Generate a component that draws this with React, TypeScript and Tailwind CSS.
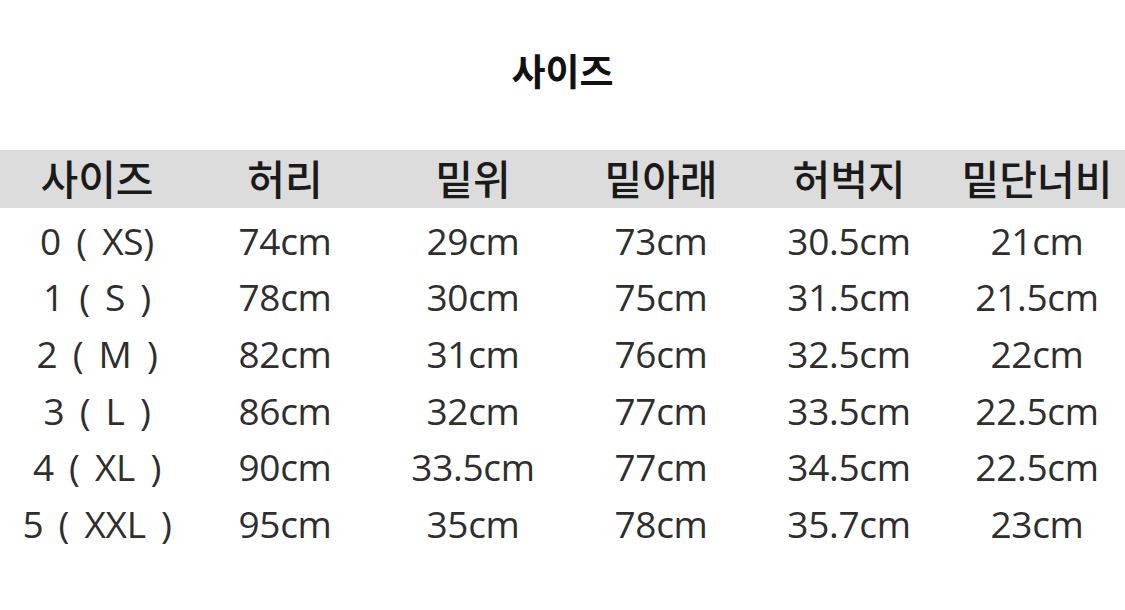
import React from 'react';

const HEADERS = ['사이즈', '허리', '밑위', '밑아래', '허벅지', '밑단너비'];

const ROWS = [
  ['0 ( XS)', '74cm', '29cm', '73cm', '30.5cm', '21cm'],
  ['1 ( S )', '78cm', '30cm', '75cm', '31.5cm', '21.5cm'],
  ['2 ( M )', '82cm', '31cm', '76cm', '32.5cm', '22cm'],
  ['3 ( L )', '86cm', '32cm', '77cm', '33.5cm', '22.5cm'],
  ['4 ( XL )', '90cm', '33.5cm', '77cm', '34.5cm', '22.5cm'],
  ['5 ( XXL )', '95cm', '35cm', '78cm', '35.7cm', '23cm'],
];

const font = { fontFamily: '"Open Sans", "Noto Sans CJK KR", sans-serif' };

export default function App() {
  return (
    <div className="w-[1125px] h-[610px] bg-white overflow-hidden" style={font}>
      <h1 className="pt-[46px] h-[150px] text-center text-[37px] font-bold text-[#111] leading-[52px]">
        사이즈
      </h1>

      <div className="bg-[#dcdcdc] h-[58px] grid grid-cols-[repeat(6,188px)] pl-[3px] items-center">
        {HEADERS.map(h => (
          <div key={h} className="text-center text-[41px] text-[#1a1a1a] font-medium leading-none">
            {h}
          </div>
        ))}
      </div>

      <div className="pt-[4px]">
        {ROWS.map((row, i) => (
          <div key={i} className="h-[56.6px] grid grid-cols-[repeat(6,188px)] pl-[3px] items-center">
            {row.map((cell, j) => (
              <div key={j} className="text-center text-[37px] text-[#2e2e2e] leading-none tracking-[-0.3px] [word-spacing:6px]">
                {cell}
              </div>
            ))}
          </div>
        ))}
      </div>
    </div>
  );
}
